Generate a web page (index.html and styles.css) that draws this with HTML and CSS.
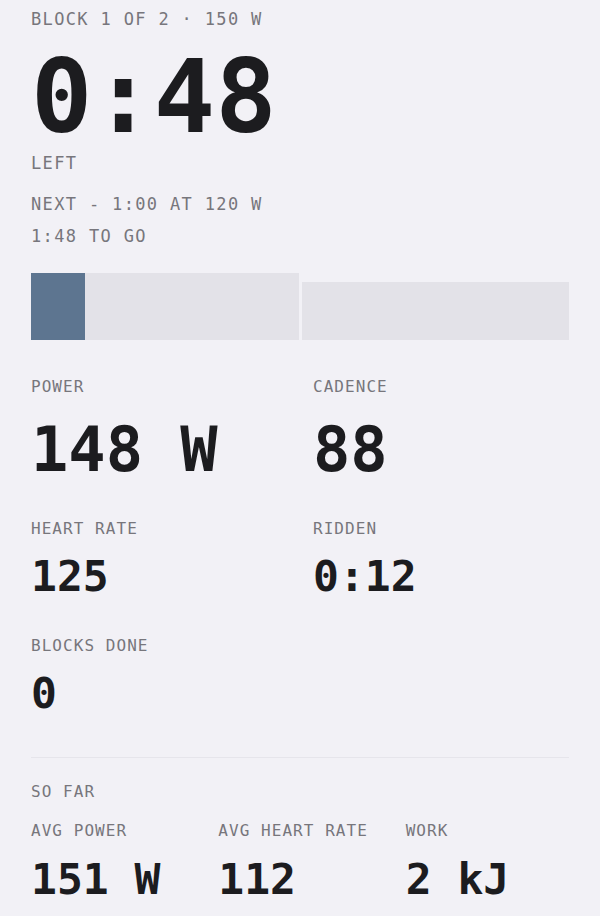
FILE: index.html
```html
<!DOCTYPE html>
<html lang="en">
<head>
    <meta charset="UTF-8">
    <meta name="viewport" content="width=device-width, initial-scale=1.0">
    <title>Workout</title>
    <link rel="stylesheet" href="styles.css">
</head>
<body>
    <section class="block-status">
        <p class="eyebrow">BLOCK 1 OF 2 · 150 W</p>
        <p class="countdown">0:48</p>
        <p class="eyebrow left">LEFT</p>
        <p class="eyebrow next">NEXT - 1:00 AT 120 W</p>
        <p class="eyebrow to-go">1:48 TO GO</p>
    </section>

    <div class="profile">
        <div class="segment" style="height: 67px;">
            <div class="segment-fill" style="width: 20%;"></div>
        </div>
        <div class="segment" style="height: 58px;"></div>
    </div>

    <section class="stats">
        <div class="stat">
            <p class="label">POWER</p>
            <p class="value value-large">148 W</p>
        </div>
        <div class="stat">
            <p class="label">CADENCE</p>
            <p class="value value-large">88</p>
        </div>
        <div class="stat">
            <p class="label">HEART RATE</p>
            <p class="value">125</p>
        </div>
        <div class="stat">
            <p class="label">RIDDEN</p>
            <p class="value">0:12</p>
        </div>
        <div class="stat">
            <p class="label">BLOCKS DONE</p>
            <p class="value">0</p>
        </div>
    </section>

    <hr class="divider">

    <section class="summary">
        <p class="label">SO FAR</p>
        <div class="summary-grid">
            <div class="stat">
                <p class="label">AVG POWER</p>
                <p class="value">151 W</p>
            </div>
            <div class="stat">
                <p class="label">AVG HEART RATE</p>
                <p class="value">112</p>
            </div>
            <div class="stat">
                <p class="label">WORK</p>
                <p class="value">2 kJ</p>
            </div>
        </div>
    </section>
</body>
</html>
```

FILE: styles.css
```css
body {
    margin: 0;
    padding: 9px 31px 0;
    background-color: #f2f1f6;
    color: #1c1c1f;
    font-family: "DejaVu Sans Mono", "Liberation Mono", monospace;
}
p {
    margin: 0;
}
.eyebrow {
    font-size: 17px;
    line-height: 20px;
    letter-spacing: 1.35px;
    color: #77767c;
}
.countdown {
    margin-top: 17px;
    font-size: 102px;
    line-height: 1;
    font-weight: bold;
}
.left {
    margin-top: 5px;
}
.next {
    margin-top: 21px;
}
.to-go {
    margin-top: 12px;
}
.profile {
    display: flex;
    align-items: flex-end;
    gap: 3px;
    height: 67px;
    margin-top: 27px;
}
.segment {
    flex: 1;
    background-color: #e3e2e8;
}
.segment-fill {
    height: 100%;
    background-color: #5d7590;
}
.stats {
    display: grid;
    grid-template-columns: 1fr 1fr;
    column-gap: 26px;
    row-gap: 38px;
    margin-top: 37px;
}
.stat {
    display: flex;
    flex-direction: column;
    gap: 16px;
}
.stat:nth-child(-n+2) {
    gap: 22px;
}
.label {
    font-size: 16px;
    line-height: 20px;
    letter-spacing: 1.05px;
    color: #77767c;
}
.value {
    font-size: 43px;
    line-height: 1;
    font-weight: bold;
}
.value-large {
    font-size: 62px;
}
.divider {
    margin: 42px 0 0;
    border: 0;
    border-top: 1px solid #e6e5eb;
}
.summary {
    margin-top: 24px;
}
.summary-grid {
    display: grid;
    grid-template-columns: repeat(3, 1fr);
    column-gap: 24px;
    margin-top: 19px;
}
.summary-grid .stat {
    gap: 17px;
}
```
